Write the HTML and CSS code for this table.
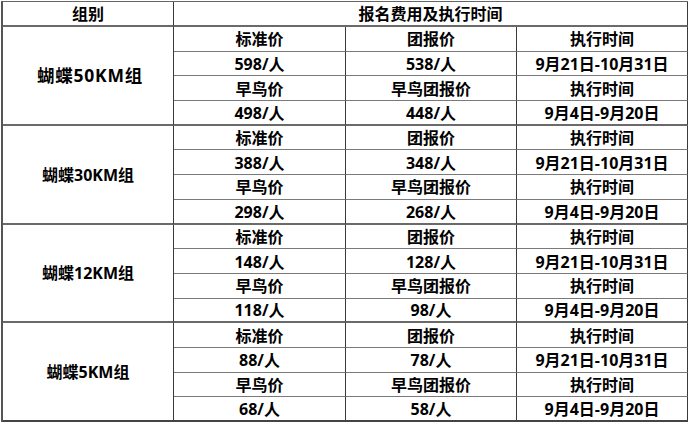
FILE: index.html
```html
<!DOCTYPE html>
<html lang="zh">
<head>
<meta charset="utf-8">
<link rel="stylesheet" href="styles.css">
</head>
<body>
<div class="sheet">
  <div class="c h">组别</div>
  <div class="c h span3">报名费用及执行时间</div>

  <div class="c grp g wide">蝴蝶50KM组</div>
  <div class="c">标准价</div><div class="c">团报价</div><div class="c">执行时间</div>
  <div class="c">598/人</div><div class="c">538/人</div><div class="c">9月21日-10月31日</div>
  <div class="c">早鸟价</div><div class="c">早鸟团报价</div><div class="c">执行时间</div>
  <div class="c g">498/人</div><div class="c g">448/人</div><div class="c g">9月4日-9月20日</div>

  <div class="c grp g">蝴蝶30KM组</div>
  <div class="c">标准价</div><div class="c">团报价</div><div class="c">执行时间</div>
  <div class="c">388/人</div><div class="c">348/人</div><div class="c">9月21日-10月31日</div>
  <div class="c">早鸟价</div><div class="c">早鸟团报价</div><div class="c">执行时间</div>
  <div class="c g">298/人</div><div class="c g">268/人</div><div class="c g">9月4日-9月20日</div>

  <div class="c grp g">蝴蝶12KM组</div>
  <div class="c">标准价</div><div class="c">团报价</div><div class="c">执行时间</div>
  <div class="c">148/人</div><div class="c">128/人</div><div class="c">9月21日-10月31日</div>
  <div class="c">早鸟价</div><div class="c">早鸟团报价</div><div class="c">执行时间</div>
  <div class="c g">118/人</div><div class="c g">98/人</div><div class="c g">9月4日-9月20日</div>

  <div class="c grp last">蝴蝶5KM组</div>
  <div class="c">标准价</div><div class="c">团报价</div><div class="c">执行时间</div>
  <div class="c">88/人</div><div class="c">78/人</div><div class="c">9月21日-10月31日</div>
  <div class="c">早鸟价</div><div class="c">早鸟团报价</div><div class="c">执行时间</div>
  <div class="c last">68/人</div><div class="c last">58/人</div><div class="c last">9月4日-9月20日</div>
</div>
</body>
</html>
```
FILE: styles.css
```css
html, body {
  margin: 0;
  padding: 0;
  background: #ffffff;
}
body {
  padding: 1px 0 0 1px;
  font-family: "Open Sans", "Noto Sans CJK SC", sans-serif;
  font-weight: 700;
  font-size: 16px;
  color: #000;
}
.sheet {
  display: grid;
  grid-template-columns: 171px 172px 171px 171px;
  grid-template-rows: 25px repeat(16, 24.6875px);
  width: max-content;
  border-top: 1px solid #666;
  border-left: 2px solid #555;
}
.c {
  box-sizing: border-box;
  display: flex;
  align-items: center;
  justify-content: center;
  border-right: 1px solid #3a3a3a;
  border-bottom: 1px solid #7a7a7a;
  white-space: nowrap;
  line-height: 1;
  padding-top: 1px;
}
.h {
  border-bottom: 2px solid #6a6a6a;
}
.span3 {
  grid-column: span 3;
}
.grp {
  grid-row: span 4;
  grid-column: 1;
}
.wide {
  font-size: 17.5px;
  letter-spacing: 0.8px;
  padding-left: 4px;
}
.g {
  border-bottom: 2px solid #6a6a6a;
}
.last {
  border-bottom: 2px solid #444;
}
```
